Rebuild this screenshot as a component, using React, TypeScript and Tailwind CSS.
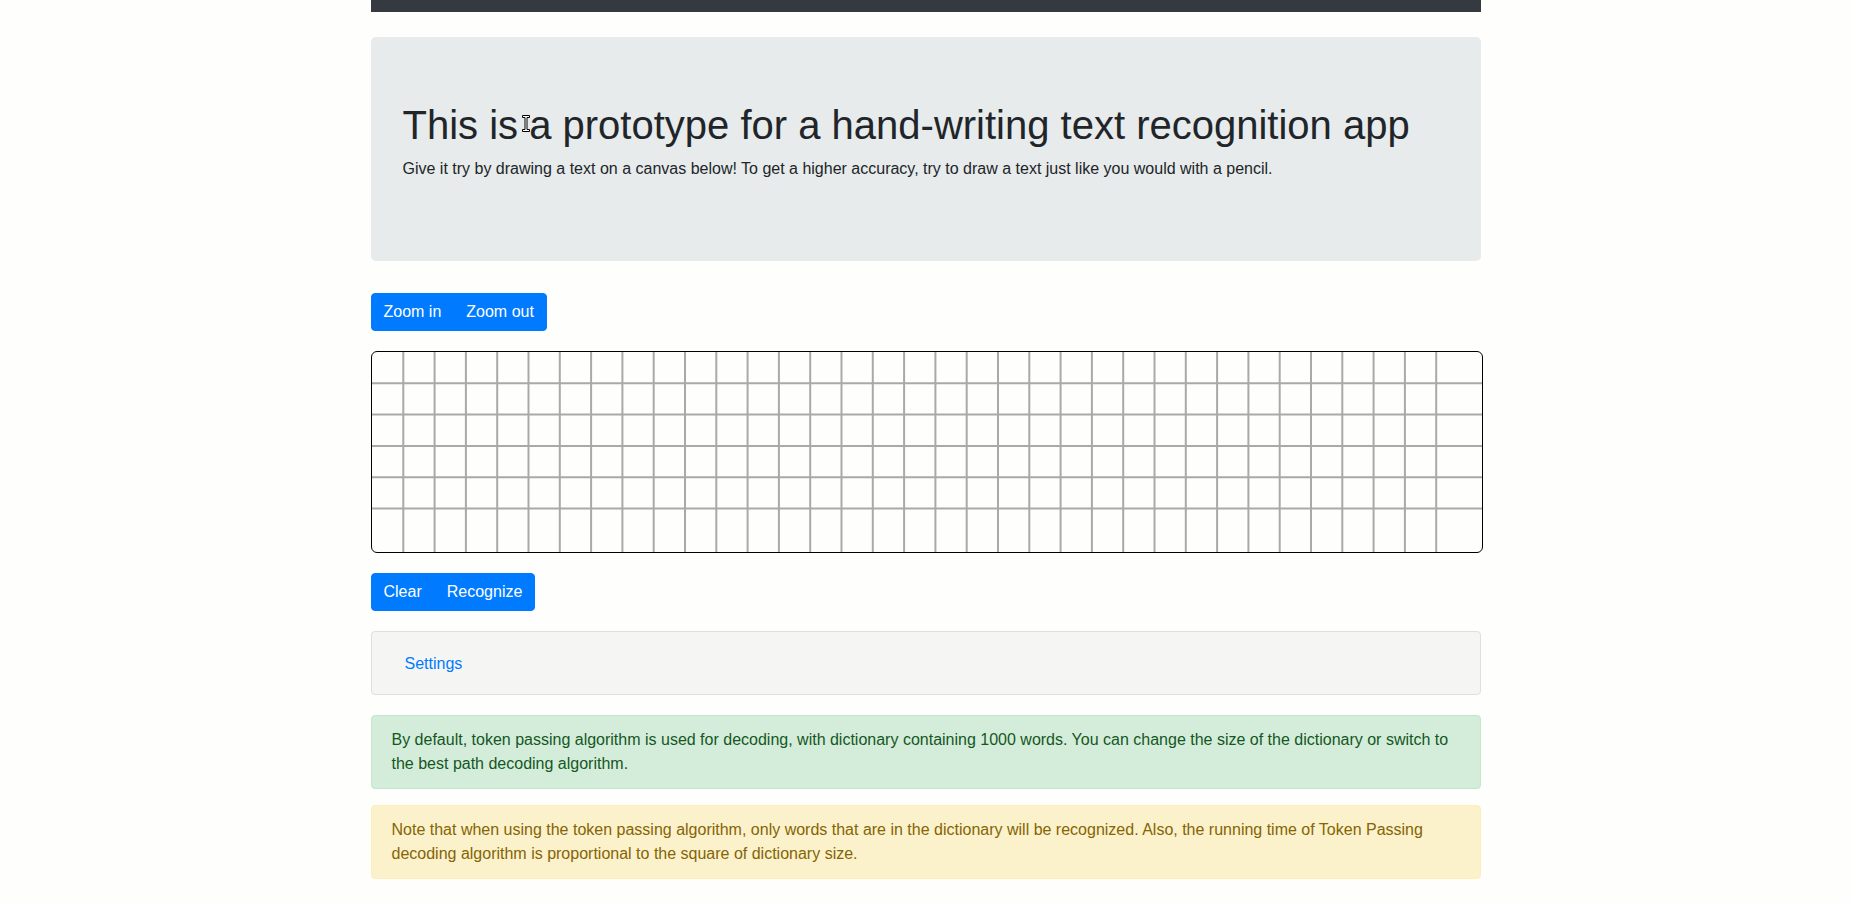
import React from 'react';

const CELL = 31.3;
const GRID_W = 1110;
const GRID_H = 200;

const cols = Array.from({ length: 34 }, (_, i) => (i + 1) * CELL);
const rows = Array.from({ length: 5 }, (_, i) => (i + 1) * CELL);

const GridCanvas: React.FC = () => (
  <div className="mt-[20px] w-[1112px] overflow-hidden rounded-[6px] border border-black bg-[#fefefc]">
    <svg width={GRID_W} height={GRID_H} className="block">
      {rows.map((y) => (
        <line key={`r${y}`} x1={0} x2={GRID_W} y1={y} y2={y} stroke="#a9a9a5" strokeWidth={2} />
      ))}
      {cols.map((x) => (
        <line key={`c${x}`} x1={x} x2={x} y1={0} y2={GRID_H} stroke="#a9a9a5" strokeWidth={2} />
      ))}
    </svg>
  </div>
);

interface GroupProps {
  labels: string[];
  className?: string;
}

const ButtonGroup: React.FC<GroupProps> = ({ labels, className = '' }) => (
  <div className={`flex ${className}`}>
    {labels.map((label, i) => (
      <button
        key={label}
        className={`border border-[#007bff] bg-[#007bff] px-[12px] py-[6px] text-[16px] leading-[24px] text-white
          ${i === 0 ? 'rounded-l-[4px]' : '-ml-px'}
          ${i === labels.length - 1 ? 'rounded-r-[4px]' : ''}`}
      >
        {label}
      </button>
    ))}
  </div>
);

// mouse cursor visible in the screenshot
const Cursor: React.FC = () => (
  <svg width="8" height="17" viewBox="0 0 8 17" className="absolute left-[119px] top-[14px]">
    <path
      d="M0.5 0.5h7v2h-2.5v12h2.5v2h-7v-2h2.5v-12h-2.5z"
      fill="#fff"
      stroke="#000"
      strokeWidth={1}
    />
  </svg>
);

export default function App() {
  return (
    <div className="min-h-screen bg-[#fefefc] font-['Liberation_Sans',Arial,sans-serif] text-[#212529]">
      <div className="mx-auto w-[1140px] px-[15px] pb-[16px]">
        <div className="h-[12px] bg-[#343a40]" />

        <div className="mt-[25px] rounded-[5px] bg-[#e7ebeb] px-[32px] py-[64px]">
          <h1 className="relative mb-[8px] text-[40px] font-medium leading-[48px]">
            This is a prototype for a hand-writing text recognition app
            <Cursor />
          </h1>
          <p className="mb-[16px] text-[16px] leading-[24px]">
            Give it try by drawing a text on a canvas below! To get a higher accuracy, try to draw a text just like you
            would with a pencil.
          </p>
        </div>

        <ButtonGroup labels={['Zoom in', 'Zoom out']} className="mt-[32px]" />

        <GridCanvas />

        <ButtonGroup labels={['Clear', 'Recognize']} className="mt-[20px]" />

        <div className="mt-[20px] rounded-[4px] border border-[#dfdfdc] bg-[#f5f6f3] px-[20px] pb-[11px] pt-[13px]">
          <button className="border border-transparent px-[12px] py-[6px] text-[16px] leading-[24px] text-[#007bff]">
            Settings
          </button>
        </div>

        <div className="mt-[20px] rounded-[4px] border border-[#c3e6cb] bg-[#d4edda] px-[20px] py-[12px] text-[16px] leading-[24px] text-[#155724]">
          By default, token passing algorithm is used for decoding, with dictionary containing 1000 words. You can change
          the size of the dictionary or switch to the best path decoding algorithm.
        </div>

        <div className="mt-[16px] rounded-[4px] border border-[#ffeeba] bg-[#fbf2cb] px-[20px] py-[12px] text-[16px] leading-[24px] text-[#856404]">
          Note that when using the token passing algorithm, only words that are in the dictionary will be recognized.
          Also, the running time of Token Passing decoding algorithm is proportional to the square of dictionary size.
        </div>
      </div>
    </div>
  );
}
